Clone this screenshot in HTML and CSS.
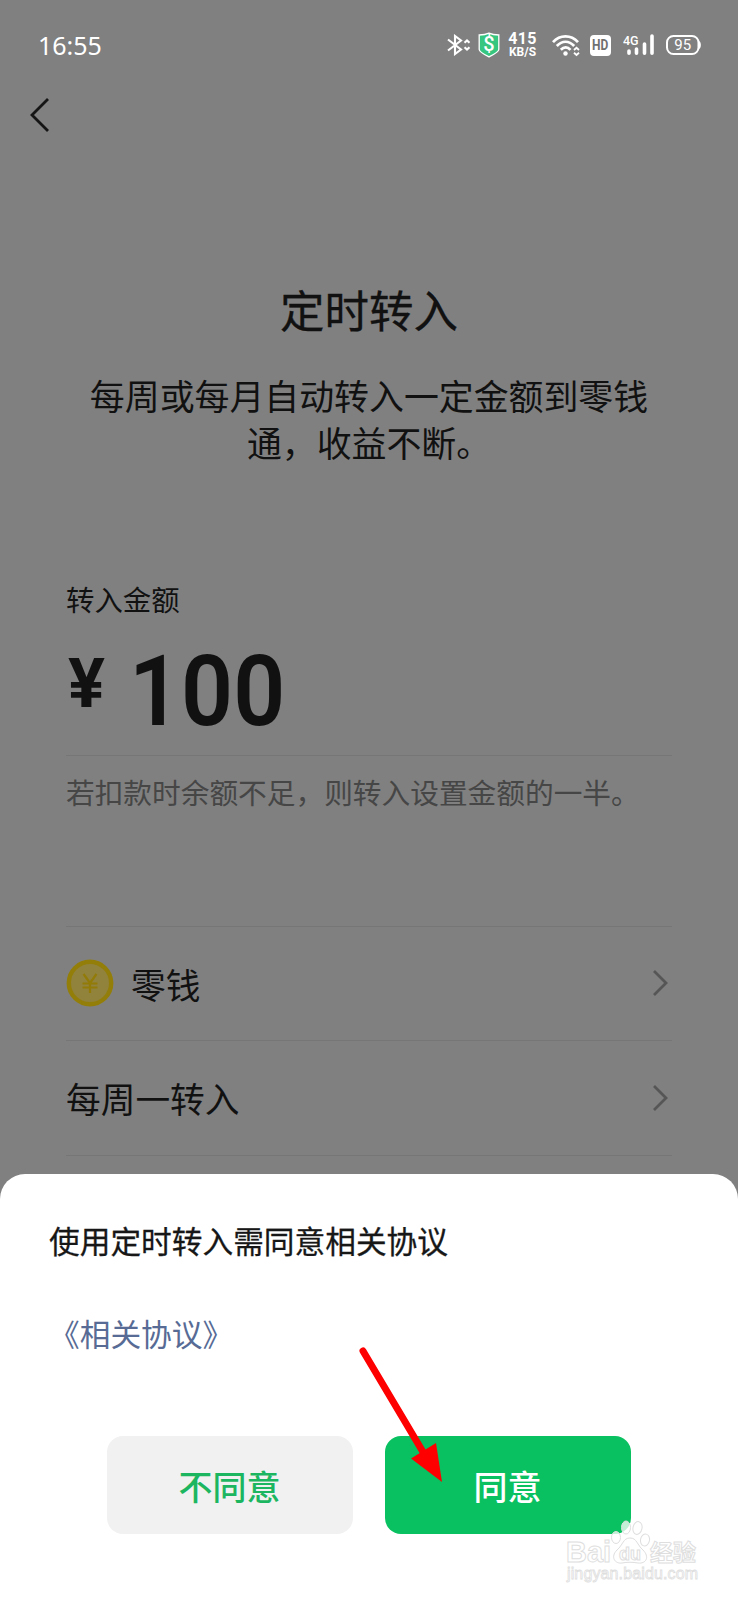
FILE: index.html
```html
<!DOCTYPE html>
<html lang="zh-CN">
<head>
<meta charset="utf-8">
<title>定时转入</title>
<link rel="stylesheet" href="styles.css">
</head>
<body>
<div class="screen">
  <header class="status">
    <span class="time">16:55</span>
    <div class="status-icons">
      <svg class="bt" width="24" height="22" viewBox="0 0 24 22" fill="none" stroke="#fff" stroke-width="2.1"><path d="M1 5.500 14 15.500 8 20V2L14 6.500 1 16.500M17.500 8.800 20 6.500 22.500 8.800M17.500 13.200 20 15.500 22.500 13.200"/></svg>
      <svg class="shield" width="22" height="26" viewBox="0 0 22 26"><path d="M11 1.200C14 2.600 17.500 3 20.800 3V17.500C20.800 20 15 22.800 11 24.800C7 22.800 1.200 20 1.200 17.500V3C4.500 3 8 2.600 11 1.200Z" fill="#36c67f" stroke="#fff" stroke-width="1.300"/><text x="11" y="19" text-anchor="middle" class="dollar">$</text></svg>
      <div class="speed"><b>415</b><small>KB/S</small></div>
      <svg class="wifi" width="29" height="23" viewBox="0 0 29 23" fill="none" stroke="#fff" stroke-width="2.700"><path d="M1 8.200C8 .5 19 .5 26 8.200M4.800 12C10 6.300 17 6.300 22.200 12M8.800 15.800C12 12.500 15.500 12.500 18.500 15.800"/><circle cx="13.500" cy="19.500" r="2.200" fill="#fff" stroke="none"/><path d="M22 16 24.500 13.800 27 16M22 18.800 24.500 21 27 18.800" stroke-width="1.800"/></svg>
      <span class="hd"><span class="hd-text">HD</span></span>
      <svg class="signal" width="32" height="22" viewBox="0 0 32 22"><text x="0" y="10.500" class="net">4G</text><path d="M6 17V19.300M13.500 15V19.300M21.500 10V19.300M29 2V19.300" fill="none" stroke="#fff" stroke-width="3.600" stroke-linecap="round"/></svg>
      <svg class="battery" width="36" height="20" viewBox="0 0 36 20"><rect x="1" y="1" width="31.500" height="18" rx="6.500" fill="none" stroke="#fff" stroke-width="2"/><path d="M33 6C35.500 7 35.500 13 33 14" fill="#fff"/><text x="16.700" y="15" text-anchor="middle" class="level">95</text></svg>
    </div>
  </header>
  <nav class="nav">
    <svg width="22" height="36" viewBox="0 0 22 36" fill="none" stroke="#151515" stroke-width="2.800"><path d="M19 2 3 18 19 34"/></svg>
  </nav>
  <main class="content">
    <h1 class="title">定时转入</h1>
    <p class="intro">每周或每月自动转入一定金额到零钱<br>通，收益不断。</p>
    <div class="label">转入金额</div>
    <div class="amount"><span class="yen">¥</span><span class="num">100</span></div>
    <p class="hint">若扣款时余额不足，则转入设置金额的一半。</p>
    <div class="list">
      <div class="row">
        <svg class="coin" width="48" height="48" viewBox="0 0 48 48"><circle cx="24" cy="24" r="21.200" fill="#91823c" stroke="#937e0a" stroke-width="4.400"/><path d="M17.500 15 24 24 30.500 15M16.500 24.500H31.500M16.500 28.500H31.500M24 24V34" fill="none" stroke="#937b08" stroke-width="2.200"/></svg>
        <span class="row-text">零钱</span>
        <svg class="chev" width="16" height="28" viewBox="0 0 16 28"><path d="M2 2 14 14 2 26"/></svg>
      </div>
      <div class="row">
        <span class="row-text">每周一转入</span>
        <svg class="chev" width="16" height="28" viewBox="0 0 16 28"><path d="M2 2 14 14 2 26"/></svg>
      </div>
    </div>
  </main>
  <section class="sheet">
    <h2 class="sheet-title">使用定时转入需同意相关协议</h2>
    <a class="link">《相关协议》</a>
    <div class="buttons">
      <button class="btn">不同意</button>
      <button class="btn primary">同意</button>
    </div>
  </section>
  <svg class="arrow" width="90" height="142" viewBox="0 0 90 142"><path d="M8 6 68 107" stroke="#fe0000" stroke-width="7" stroke-linecap="round"/><path d="M87 137 81 98 56 113.500Z" fill="#fe0000"/></svg>
  <svg class="mark" width="144" height="70" viewBox="0 0 144 70">
    <g class="mark-shape"><ellipse cx="56" cy="24.500" rx="4.500" ry="6"/><ellipse cx="66" cy="14.500" rx="4.500" ry="6.500"/><ellipse cx="77.500" cy="15" rx="4.500" ry="6.500" transform="rotate(12 77.500 15)"/><ellipse cx="85" cy="27" rx="4.500" ry="6" transform="rotate(12 85 27)"/><path d="M70 25C63 25 63 32 57 37C50 44 55 51 62 50C67 49 73 49 78 50C86 51 90 44 83 37C77 32 77 25 70 25Z"/></g>
    <text x="6" y="49" class="mark-name" textLength="45" lengthAdjust="spacingAndGlyphs">Bai</text>
    <text x="59" y="46.500" class="mark-du">du</text>
    <text x="90" y="48" class="mark-cn">经验</text>
    <text x="7" y="66" class="mark-url" textLength="131">jingyan.baidu.com</text>
  </svg>
</div>
</body>
</html>
```
FILE: styles.css
```css
* { box-sizing: border-box; }
body { margin: 0; }
.screen {
  position: relative;
  width: 738px;
  height: 1600px;
  overflow: hidden;
  display: flex;
  flex-direction: column;
  background: #808080;
  color: #111;
  font-family: Roboto, "Noto Sans CJK SC", sans-serif;
}
.status {
  height: 90px;
  flex: none;
  padding: 0 36px 0 38px;
  display: flex;
  align-items: center;
  color: #fff;
}
.time { font: 25px/30px "Noto Sans", sans-serif; }
.status-icons { margin-left: auto; display: flex; align-items: center; }
.shield { margin-left: 7px; }
.dollar { font: 500 20px Roboto, sans-serif; fill: #fff; }
.speed { margin-left: 8px; width: 29px; display: flex; flex-direction: column; align-items: center; font-family: Roboto, sans-serif; }
.speed b { font-size: 16px; line-height: 14px; letter-spacing: .3px; }
.speed small { font-size: 12px; line-height: 12px; font-weight: 700; }
.wifi { margin-left: 15px; }
.hd { margin-left: 9px; width: 21px; height: 21px; border-radius: 4px; background: #fff; color: #707070; font: 700 15px/21px Roboto, sans-serif; display: flex; justify-content: center; }
.hd-text { transform: scaleX(.8); }
.signal { margin-left: 12px; }
.net { font: 500 12.500px Roboto, sans-serif; fill: #fff; }
.battery { margin-left: 11px; }
.level { font: 15px Roboto, sans-serif; fill: #fff; }
.nav { height: 50px; flex: none; padding: 7px 0 0 29px; }
.content { flex: none; height: 1034px; padding: 0 66px; }
.title { margin: 140px 0 0; font-size: 44.500px; line-height: 66px; font-weight: 400; -webkit-text-stroke: .3px #111; text-align: center; }
.intro { margin: 30px -10px 0; font-size: 34.900px; line-height: 46.500px; text-align: center; font-weight: 400; }
.label { margin-top: 112px; font-size: 28.400px; line-height: 42px; }
.amount { height: 133px; border-bottom: 1px solid #767676; display: flex; align-items: flex-start; font-family: Roboto, sans-serif; }
.yen { width: 65px; font-size: 69px; line-height: 80px; font-weight: 700; padding: 21px 0 0 2px; }
.num { margin-top: 12px; font-size: 98px; line-height: 114px; font-weight: 600; transform: translateX(-2px) scaleX(.93); transform-origin: left; }
.hint { margin: 17px 0 0; font-size: 28.700px; line-height: 42px; color: #464646; white-space: nowrap; }
.list { margin-top: 111px; border-top: 1px solid #767676; }
.row { height: 114px; border-bottom: 1px solid #767676; display: flex; align-items: center; font-size: 34.700px; }
.row + .row { height: 115px; }
.coin { margin-right: 17px; margin-bottom: 1px; }
.chev { margin-left: auto; margin-right: 4px; margin-bottom: 1px; fill: none; stroke: #565656; stroke-width: 2.800px; }
.sheet { flex: none; height: 426px; padding: 46px 0 0 49px; border-radius: 25px 25px 0 0; background: #fff; }
.sheet-title { margin: 0; font-size: 30.700px; line-height: 46px; font-weight: 400; -webkit-text-stroke: .3px #171717; color: #171717; }
.link { display: block; margin-top: 47px; font-size: 30.700px; line-height: 46px; color: #576b95; }
.buttons { margin: 77px 0 0 57.500px; display: flex; gap: 32px; }
.btn { width: 246px; height: 98px; border: 0; padding: 2px 0 0; border-radius: 16px; background: #f1f1f1; color: #1db660; font: 500 34px/96px "Noto Sans CJK SC", sans-serif; }
.primary { background: #09c160; color: #fff; }
.arrow { position: absolute; left: 355px; top: 1345px; }
.mark { position: absolute; left: 560px; top: 1513px; fill: #fff; stroke: #dedede; stroke-width: 1px; }
.mark-shape { fill: rgba(255,255,255,.75); }
.mark-name { font: 700 30px "Liberation Sans", sans-serif; }
.mark-du { font: 700 18px "Liberation Sans", sans-serif; }
.mark-cn { font: 700 23px "Noto Sans CJK SC", sans-serif; }
.mark-url { font: 16px "Liberation Sans", sans-serif; fill: #fff; stroke-width: .8px; }
```
